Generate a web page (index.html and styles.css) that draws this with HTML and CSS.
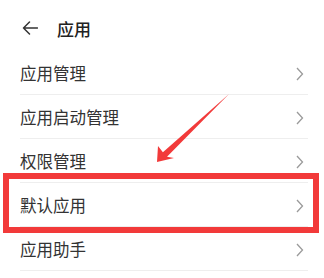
FILE: index.html
```html
<!DOCTYPE html>
<html lang="zh">
<head>
<meta charset="utf-8">
<link rel="stylesheet" href="styles.css">
</head>
<body>
<div class="page">
  <header class="header">
    <svg class="back" width="16" height="14" viewBox="0 0 16 14">
      <path d="M15.5 7 H1.5 M7.5 1 L1.5 7 L7.5 13" fill="none" stroke="#333" stroke-width="1.5" stroke-linecap="round" stroke-linejoin="round"/>
    </svg>
    <h1 class="title">应用</h1>
  </header>
  <ul class="list">
    <li class="row"><span>应用管理</span><svg class="chev" width="8" height="14" viewBox="0 0 8 14"><path d="M1 1 L6.5 7 L1 13" fill="none" stroke="#9a9a9a" stroke-width="1.3"/></svg></li>
    <li class="row"><span>应用启动管理</span><svg class="chev" width="8" height="14" viewBox="0 0 8 14"><path d="M1 1 L6.5 7 L1 13" fill="none" stroke="#9a9a9a" stroke-width="1.3"/></svg></li>
    <li class="row"><span>权限管理</span><svg class="chev" width="8" height="14" viewBox="0 0 8 14"><path d="M1 1 L6.5 7 L1 13" fill="none" stroke="#9a9a9a" stroke-width="1.3"/></svg></li>
    <li class="row"><span>默认应用</span><svg class="chev" width="8" height="14" viewBox="0 0 8 14"><path d="M1 1 L6.5 7 L1 13" fill="none" stroke="#9a9a9a" stroke-width="1.3"/></svg></li>
    <li class="row"><span>应用助手</span><svg class="chev" width="8" height="14" viewBox="0 0 8 14"><path d="M1 1 L6.5 7 L1 13" fill="none" stroke="#9a9a9a" stroke-width="1.3"/></svg></li>
  </ul>
  <div class="highlight"></div>
  <svg class="pointer" width="324" height="278" viewBox="0 0 324 278">
    <polygon points="229,94 167,156.7 174,158 157,162 158,146 162.9,152.3" fill="#f23a3a"/>
  </svg>
</div>
</body>
</html>
```
FILE: styles.css
```css
html, body {
  margin: 0;
  padding: 0;
  background: #fff;
}
.page {
  position: relative;
  width: 324px;
  height: 278px;
  overflow: hidden;
  font-family: "Noto Sans CJK SC", "Noto Sans", sans-serif;
  color: #333;
}
.header {
  box-sizing: border-box;
  height: 51px;
  padding: 5px 0 0 22px;
  display: flex;
  align-items: center;
}
.back {
  display: block;
}
.title {
  margin: 0 0 0 19px;
  font-size: 17px;
  font-weight: 500;
  line-height: 1;
  color: #222;
}
.list {
  list-style: none;
  margin: 0 16px 0 20px;
  padding: 0;
}
.row {
  box-sizing: border-box;
  height: 44px;
  border-bottom: 1px solid #eeeeee;
  display: flex;
  align-items: center;
  justify-content: space-between;
  padding: 2px 4px 0 0;
  font-size: 16.5px;
  line-height: 1;
}
.chev {
  display: block;
}
.highlight {
  position: absolute;
  left: 3px;
  top: 173px;
  width: 316px;
  height: 60px;
  box-sizing: border-box;
  border: 6px solid #f23a3a;
}
.pointer {
  position: absolute;
  left: 0;
  top: 0;
}
```
